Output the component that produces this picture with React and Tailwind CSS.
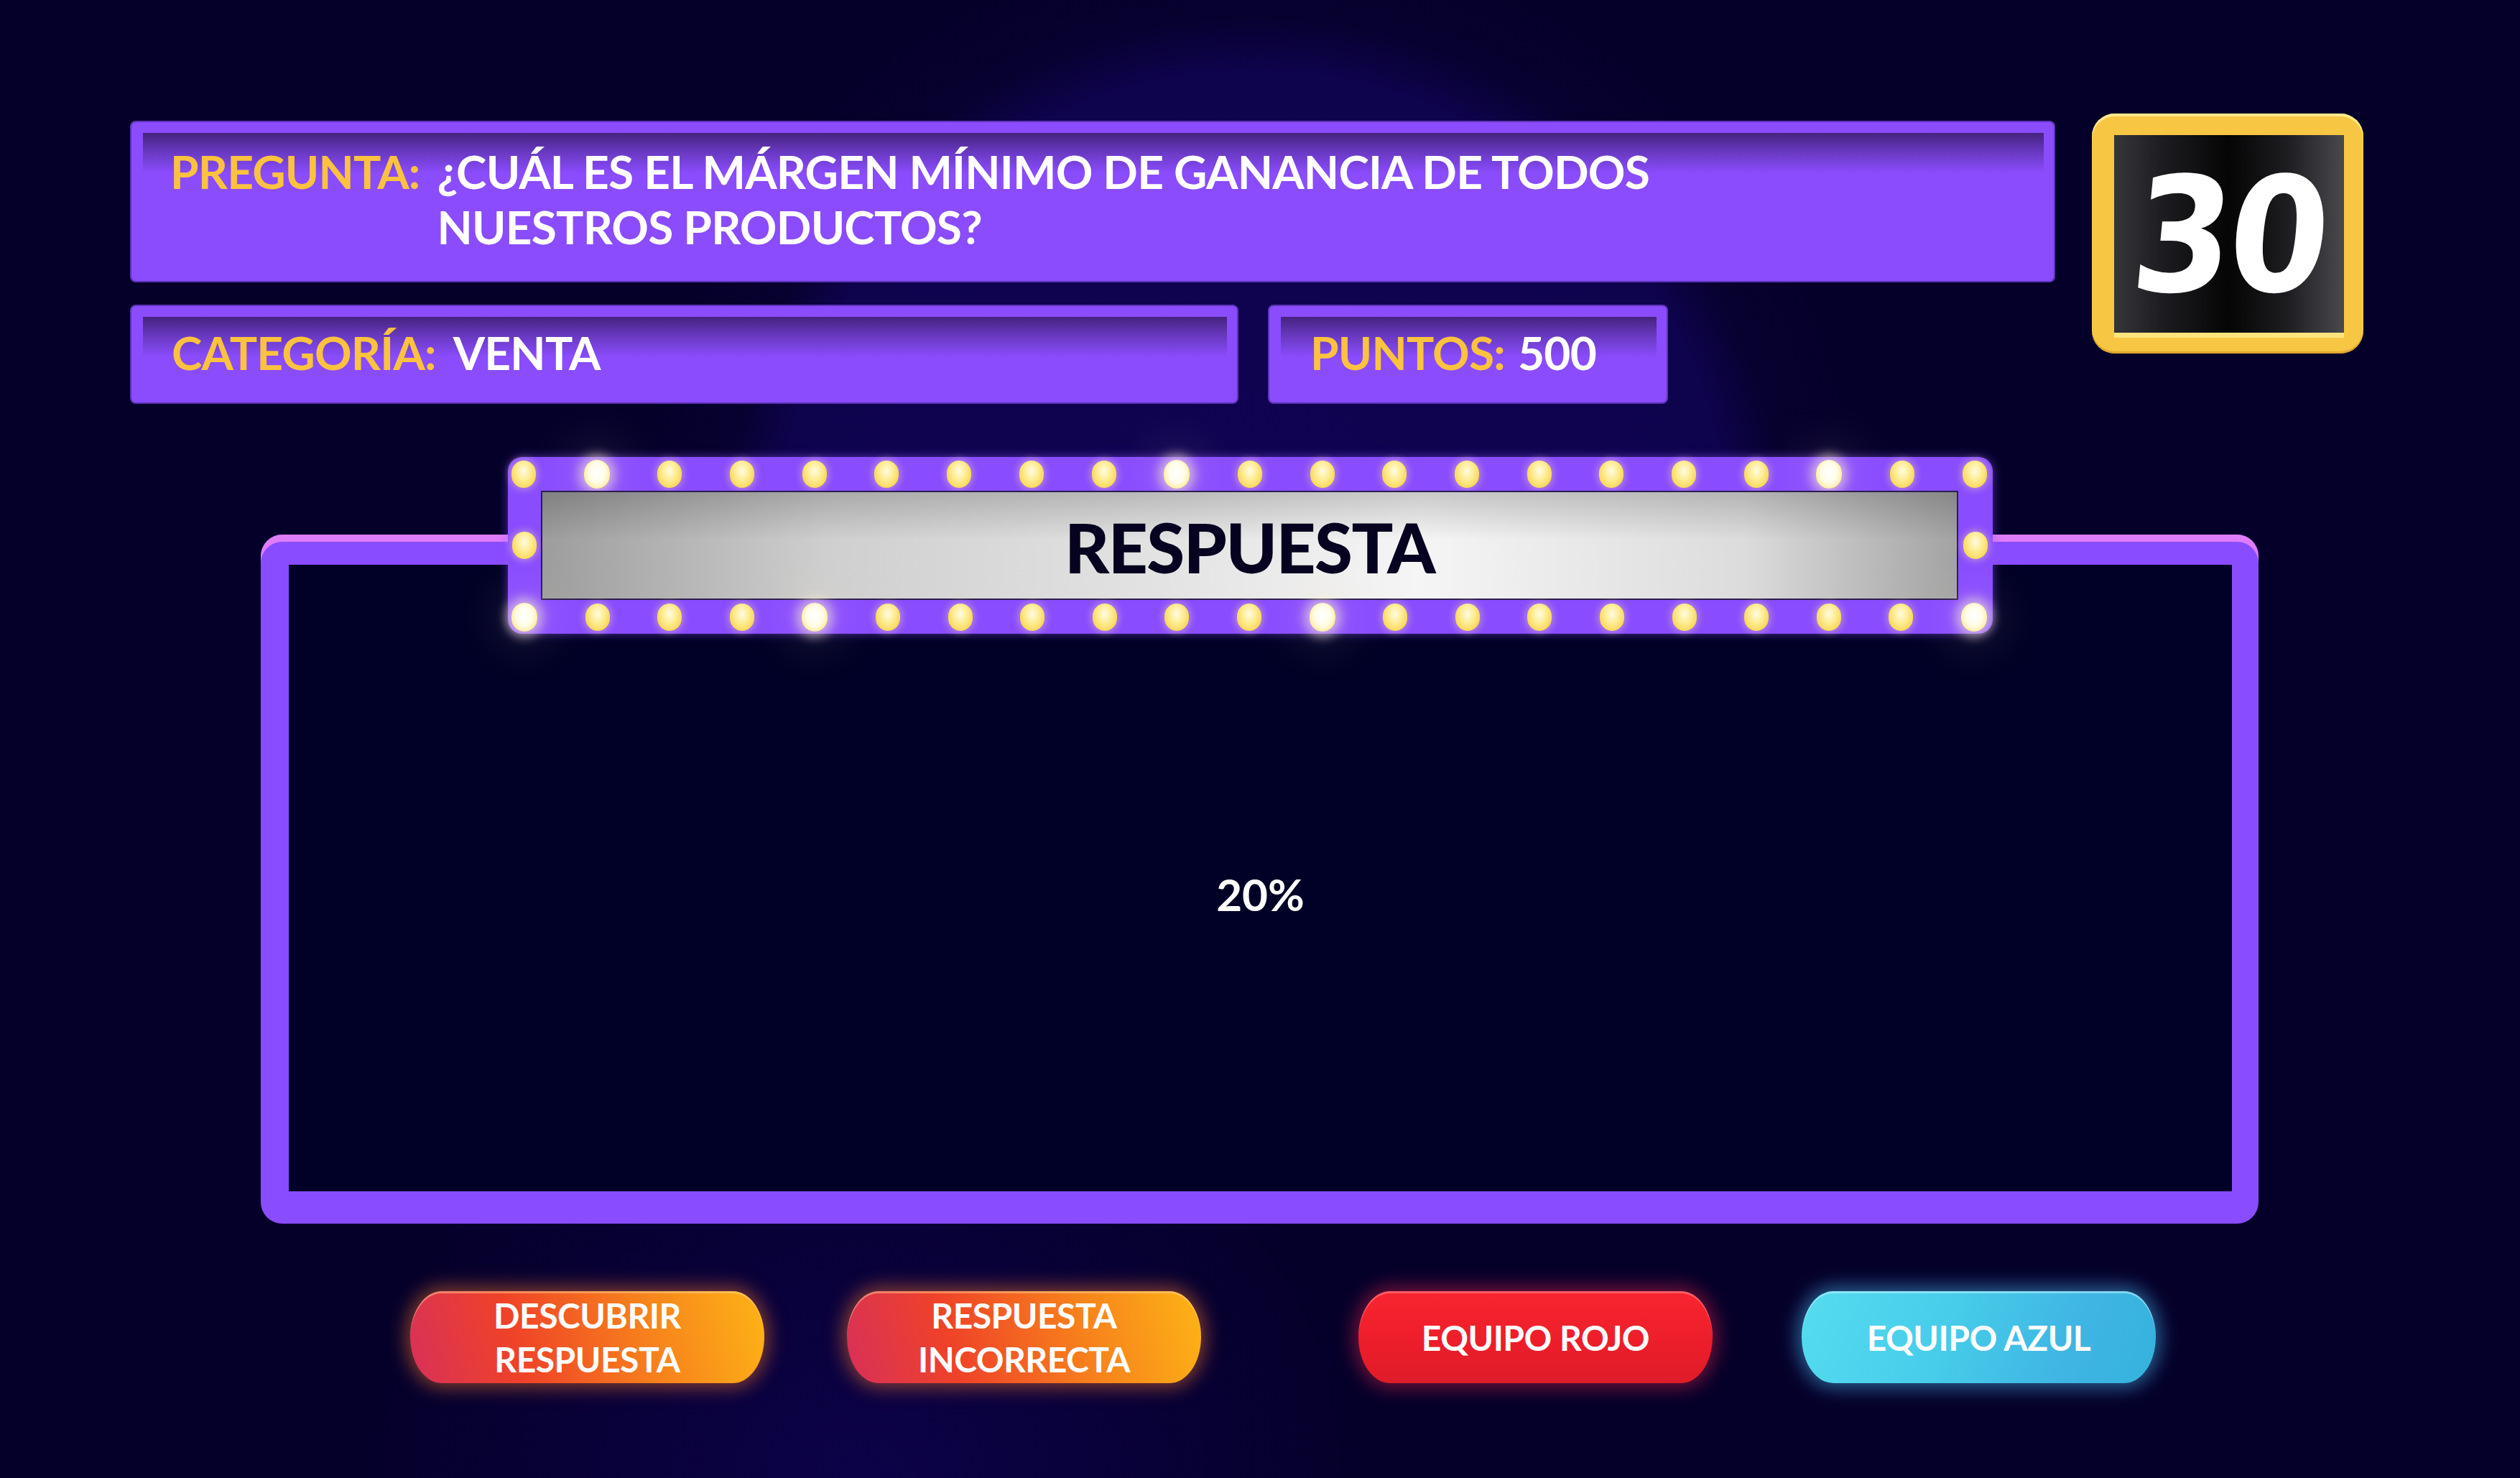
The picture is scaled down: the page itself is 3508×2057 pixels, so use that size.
const TOP_BRIGHT = [1, 9, 18];
const BOTTOM_BRIGHT = [0, 4, 11, 20];

function Bulb({ bright }) {
  if (bright) {
    return (
      <span className="block w-[36px] h-[40px] shrink-0 rounded-full bg-[radial-gradient(ellipse_at_50%_45%,#ffffff_0%,#fffce8_45%,#fde98f_80%,#f2c84a_100%)] shadow-[0_0_16px_7px_rgba(255,244,210,0.6),0_0_60px_30px_rgba(255,240,210,0.08)]" />
    );
  }
  return (
    <span className="block w-[34px] h-[38px] shrink-0 rounded-full bg-[radial-gradient(ellipse_at_50%_38%,#fffbe2_0%,#fdec92_40%,#f7d552_78%,#e2b12e_100%)] shadow-[0_0_10px_3px_rgba(255,236,170,0.35)]" />
  );
}

function BulbRow({ bright }) {
  return (
    <div className="h-[47px] flex items-center justify-between pl-[5px] pr-[8px]">
      {Array.from({ length: 21 }).map((_, i) => (
        <Bulb key={i} bright={bright.includes(i)} />
      ))}
    </div>
  );
}

function InfoBox({ className, children }) {
  return (
    <div className={`flex rounded-[8px] bg-[#8a4cfc] border-2 border-[#5d34b8] pt-[15px] pl-[16px] pr-[14px] ${className}`}>
      <div className="flex-1 bg-[linear-gradient(180deg,#46237f_0px,#6a3ac4_28px,#8a4cfc_56px)]">
        {children}
      </div>
    </div>
  );
}

function GameButton({ className, children }) {
  return (
    <button
      className={`w-[493px] h-[128px] rounded-[44px/64px] flex items-center justify-center text-white font-bold text-[48px] leading-[61px] tracking-[-0.5px] text-center ${className}`}
    >
      {children}
    </button>
  );
}

export default function App() {
  return (
    <div className="w-[3508px] h-[2057px] overflow-hidden bg-[#05002a] bg-[radial-gradient(circle_at_1745px_760px,#100352_0px,#0e034d_660px,#07012f_740px,transparent_860px),radial-gradient(ellipse_at_1200px_2057px,#0c0248_0px,transparent_700px)] font-['Lato','Open_Sans',sans-serif]">
      {/* top info */}
      <div className="flex items-start pt-[158px] pl-[181px]">
        <div className="w-[2680px] mt-[10px] flex flex-col gap-[31px]">
          <InfoBox className="h-[225px]">
            <div className="flex gap-[24px] pl-[38px] pt-[15px] text-[64px] leading-[77px] font-bold tracking-[-0.8px]">
              <span className="text-[#fbc23f]">PREGUNTA:</span>
              <span className="text-white">
                ¿CUÁL ES EL MÁRGEN MÍNIMO DE GANANCIA DE TODOS
                <br />
                NUESTROS PRODUCTOS?
              </span>
            </div>
          </InfoBox>
          <div className="flex gap-[41px]">
            <InfoBox className="w-[1543px] h-[138px]">
              <div className="flex gap-[24px] pl-[40px] pt-[11px] text-[64px] leading-[77px] font-bold tracking-[-0.8px]">
                <span className="text-[#fbc23f]">CATEGORÍA:</span>
                <span className="text-white">VENTA</span>
              </div>
            </InfoBox>
            <InfoBox className="w-[557px] h-[138px]">
              <div className="flex gap-[18px] pl-[41px] pt-[11px] text-[64px] leading-[77px] font-bold tracking-[-0.8px]">
                <span className="text-[#fbc23f]">PUNTOS:</span>
                <span className="text-white">500</span>
              </div>
            </InfoBox>
          </div>
        </div>

        {/* timer */}
        <div className="ml-[51px] w-[378px] h-[334px] rounded-[32px] bg-[#f7c744] shadow-[inset_0_4px_0_#fde98a,inset_0_-3px_0_#e0a92e] pt-[30px] pl-[31px] pr-[27px]">
          <div className="h-[275px] flex items-center justify-center bg-[linear-gradient(90deg,#36353a_0%,#1c1b1f_22%,#050505_50%,#1d1c20_75%,#4a494e_100%)] shadow-[0_7px_0_#fde47c]">
            <span className="text-white font-bold text-[222px] leading-none tracking-[-6px] -skew-x-6 scale-x-90 font-['DejaVu_Sans',sans-serif] mt-[4px]">
              30
            </span>
          </div>
        </div>
      </div>

      {/* answer area */}
      <div className="mt-[74px] ml-[363px] w-[2781px] flex flex-col">
        <div className="relative z-10 ml-[344px] w-[2067px] h-[246px] flex flex-col rounded-[20px] bg-[#8a4cff] shadow-[0_0_14px_rgba(150,90,255,0.5)]">
          <BulbRow bright={TOP_BRIGHT} />
          <div className="flex-1 flex items-center">
            <div className="w-[46px] flex justify-center">
              <Bulb />
            </div>
            <div className="flex-1 h-full flex items-center justify-center border-2 border-[#2b1d4d] bg-[linear-gradient(180deg,rgba(0,0,0,0.18)_0%,rgba(0,0,0,0)_45%),linear-gradient(90deg,#9d9d9d_0%,#cfcfcf_20%,#e4e4e4_45%,#f5f5f5_62%,#dcdcdc_85%,#a3a3a3_100%)]">
              <span className="text-[#05031f] font-black text-[96px] leading-none tracking-[-1.5px] mt-[4px]">
                RESPUESTA
              </span>
            </div>
            <div className="w-[48px] flex justify-center">
              <Bulb />
            </div>
          </div>
          <BulbRow bright={BOTTOM_BRIGHT} />
        </div>

        <div className="-mt-[138px] h-[959px] flex rounded-[30px] bg-[#8a4cff] shadow-[inset_0_10px_0_#df7df8] pt-[42px] pl-[39px] pr-[37px] pb-[45px]">
          <div className="flex-1 flex items-center justify-center pt-[44px] bg-[#010026]">
            <span className="text-white font-bold text-[62px] leading-none">20%</span>
          </div>
        </div>
      </div>

      {/* buttons */}
      <div className="mt-[94px] flex pl-[571px]">
        <GameButton className="bg-[linear-gradient(75deg,#d8305a_0%,#ef4228_30%,#f7811c_66%,#fdb416_100%)] shadow-[0_0_26px_6px_rgba(255,120,40,0.5),inset_0_3px_0_rgba(255,220,160,0.45)]">
          DESCUBRIR
          <br />
          RESPUESTA
        </GameButton>
        <GameButton className="ml-[115px] bg-[linear-gradient(75deg,#d8305a_0%,#ef4228_30%,#f7811c_66%,#fdb416_100%)] shadow-[0_0_26px_6px_rgba(255,120,40,0.5),inset_0_3px_0_rgba(255,220,160,0.45)]">
          RESPUESTA
          <br />
          INCORRECTA
        </GameButton>
        <GameButton className="ml-[219px] bg-[linear-gradient(180deg,#f7252f_0%,#ec1d2a_60%,#de1d2a_100%)] shadow-[0_0_26px_6px_rgba(255,40,70,0.45),inset_0_3px_0_rgba(255,160,170,0.45)]">
          EQUIPO ROJO
        </GameButton>
        <GameButton className="ml-[124px] bg-[linear-gradient(110deg,#55dcf0_0%,#47cdea_40%,#3fb5e3_75%,#35b2dd_100%)] shadow-[0_0_26px_6px_rgba(80,200,255,0.5),inset_0_3px_0_rgba(200,245,255,0.5)]">
          EQUIPO AZUL
        </GameButton>
      </div>
    </div>
  );
}
